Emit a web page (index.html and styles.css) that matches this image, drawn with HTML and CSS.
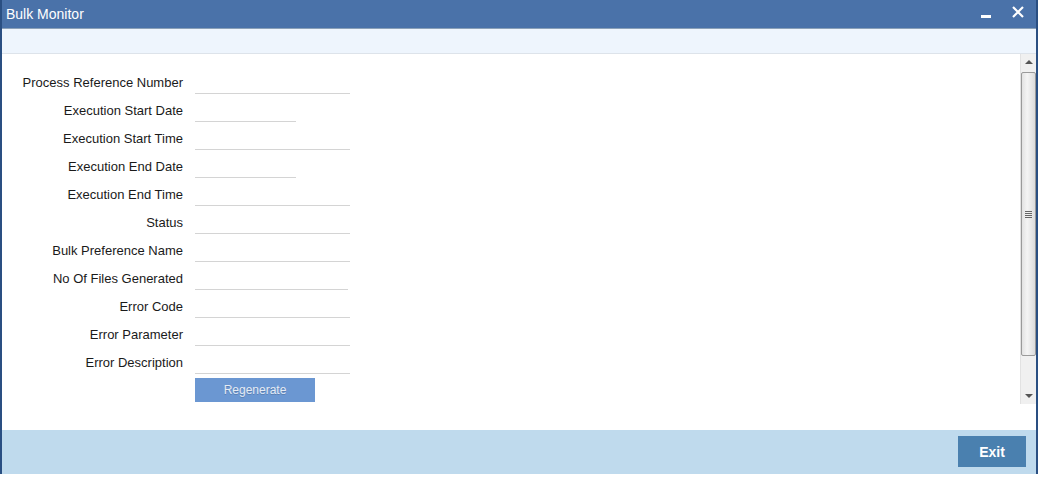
FILE: index.html
```html
<!DOCTYPE html>
<html lang="en">
<head>
    <meta charset="UTF-8">
    <title>Bulk Monitor</title>
    <link rel="stylesheet" href="styles.css">
</head>
<body>
    <div class="window">
        <div class="titlebar">
            <span class="title">Bulk Monitor</span>
            <div class="controls">
                <span class="minimize"></span>
                <svg class="close" width="12" height="12" viewBox="0 0 12 12">
                    <path d="M1 1 L11 11 M11 1 L1 11" stroke="#fff" stroke-width="2.2"/>
                </svg>
            </div>
        </div>
        <div class="toolband"></div>

        <div class="content">
            <div class="form">
                <div class="row"><label>Process Reference Number</label><input type="text" class="field"></div>
                <div class="row"><label>Execution Start Date</label><input type="text" class="field short"></div>
                <div class="row"><label>Execution Start Time</label><input type="text" class="field"></div>
                <div class="row"><label>Execution End Date</label><input type="text" class="field short"></div>
                <div class="row"><label>Execution End Time</label><input type="text" class="field"></div>
                <div class="row"><label>Status</label><input type="text" class="field"></div>
                <div class="row"><label>Bulk Preference Name</label><input type="text" class="field"></div>
                <div class="row"><label>No Of Files Generated</label><input type="text" class="field mid"></div>
                <div class="row"><label>Error Code</label><input type="text" class="field"></div>
                <div class="row"><label>Error Parameter</label><input type="text" class="field"></div>
                <div class="row"><label>Error Description</label><input type="text" class="field"></div>
                <div class="row"><span class="spacer"></span><button class="regen" disabled>Regenerate</button></div>
            </div>
            <div class="scrollbar">
                <div class="arrow up"></div>
                <div class="thumb"><span class="grip"></span></div>
                <div class="arrow down"></div>
            </div>
        </div>

        <div class="footer">
            <button class="exit">Exit</button>
        </div>
    </div>
</body>
</html>
```

FILE: styles.css
```css
body {
    margin: 0;
    background-color: #fff;
    font-family: 'Liberation Sans', Arial, sans-serif;
    font-size: 12px;
    color: #1a1a1a;
}

.window {
    width: 1038px;
    height: 474px;
    box-sizing: border-box;
    border-left: 2px solid #2a4f82;
    border-right: 2px solid #2a4f82;
    display: flex;
    flex-direction: column;
}

.titlebar {
    height: 28px;
    background-color: #4a72a9;
    border-bottom: 1px solid #8aa0b8;
    display: flex;
    align-items: center;
    justify-content: space-between;
    padding: 0 12px 0 4px;
}

.title {
    color: #fff;
    font-size: 14px;
}

.controls {
    display: flex;
    align-items: center;
    gap: 21px;
    margin-top: -4px;
}

.minimize {
    width: 10px;
    height: 3px;
    background-color: #fff;
    margin-top: 8px;
}

.toolband {
    height: 24px;
    background-color: #eef5fd;
    border-bottom: 1px solid #dde3ea;
}

.content {
    height: 376px;
    display: flex;
    align-items: flex-start;
}

.form {
    flex: 1;
    padding-top: 14px;
}

.row {
    display: flex;
    height: 28px;
}

.row label {
    width: 181px;
    text-align: right;
    font-size: 13px;
    line-height: 30px;
    margin-right: 12px;
}

.spacer {
    width: 193px;
}

.field {
    width: 155px;
    height: 26px;
    box-sizing: border-box;
    border: none;
    border-bottom: 1px solid #d4d4d4;
    outline: none;
    background: transparent;
}

.field.short {
    width: 101px;
}

.field.mid {
    width: 153px;
}

.regen {
    margin-top: 2px;
    width: 120px;
    height: 24px;
    border: none;
    background-color: #6b97d2;
    color: #e4ebf4;
    text-shadow: 0 1px 0 #5a7fb3;
    font-family: 'Liberation Sans', Arial, sans-serif;
    font-size: 12px;
}

.scrollbar {
    width: 16px;
    height: 350px;
    box-sizing: border-box;
    background-color: #f0f0f0;
    border-left: 1px solid #e2e2e2;
    display: flex;
    flex-direction: column;
    align-items: center;
}

.arrow {
    height: 17px;
    width: 100%;
    position: relative;
}

.arrow::after {
    content: '';
    position: absolute;
    left: 4px;
    border-left: 4px solid transparent;
    border-right: 4px solid transparent;
}

.arrow.up::after {
    top: 6px;
    border-bottom: 4px solid #555;
}

.arrow.down::after {
    top: 7px;
    border-top: 4px solid #555;
}

.thumb {
    width: 15px;
    height: 284px;
    margin: 1px 0 31px;
    box-sizing: border-box;
    border: 1px solid #9a9a9a;
    border-radius: 2px;
    background: linear-gradient(to right, #e2e2e2, #f4f4f4 40%, #dcdcdc);
    display: flex;
    align-items: center;
    justify-content: center;
}

.grip {
    width: 7px;
    height: 7px;
    background: repeating-linear-gradient(to bottom, #666 0 1px, transparent 1px 2px);
}

.footer {
    height: 44px;
    background-color: #bfdaed;
    display: flex;
    justify-content: flex-end;
    align-items: flex-start;
    padding: 6px 10px 0 0;
    box-sizing: border-box;
}

.exit {
    width: 68px;
    height: 31px;
    border: none;
    background-color: #4a80af;
    color: #fff;
    font-family: 'Liberation Sans', Arial, sans-serif;
    font-size: 14px;
    font-weight: bold;
}
```
